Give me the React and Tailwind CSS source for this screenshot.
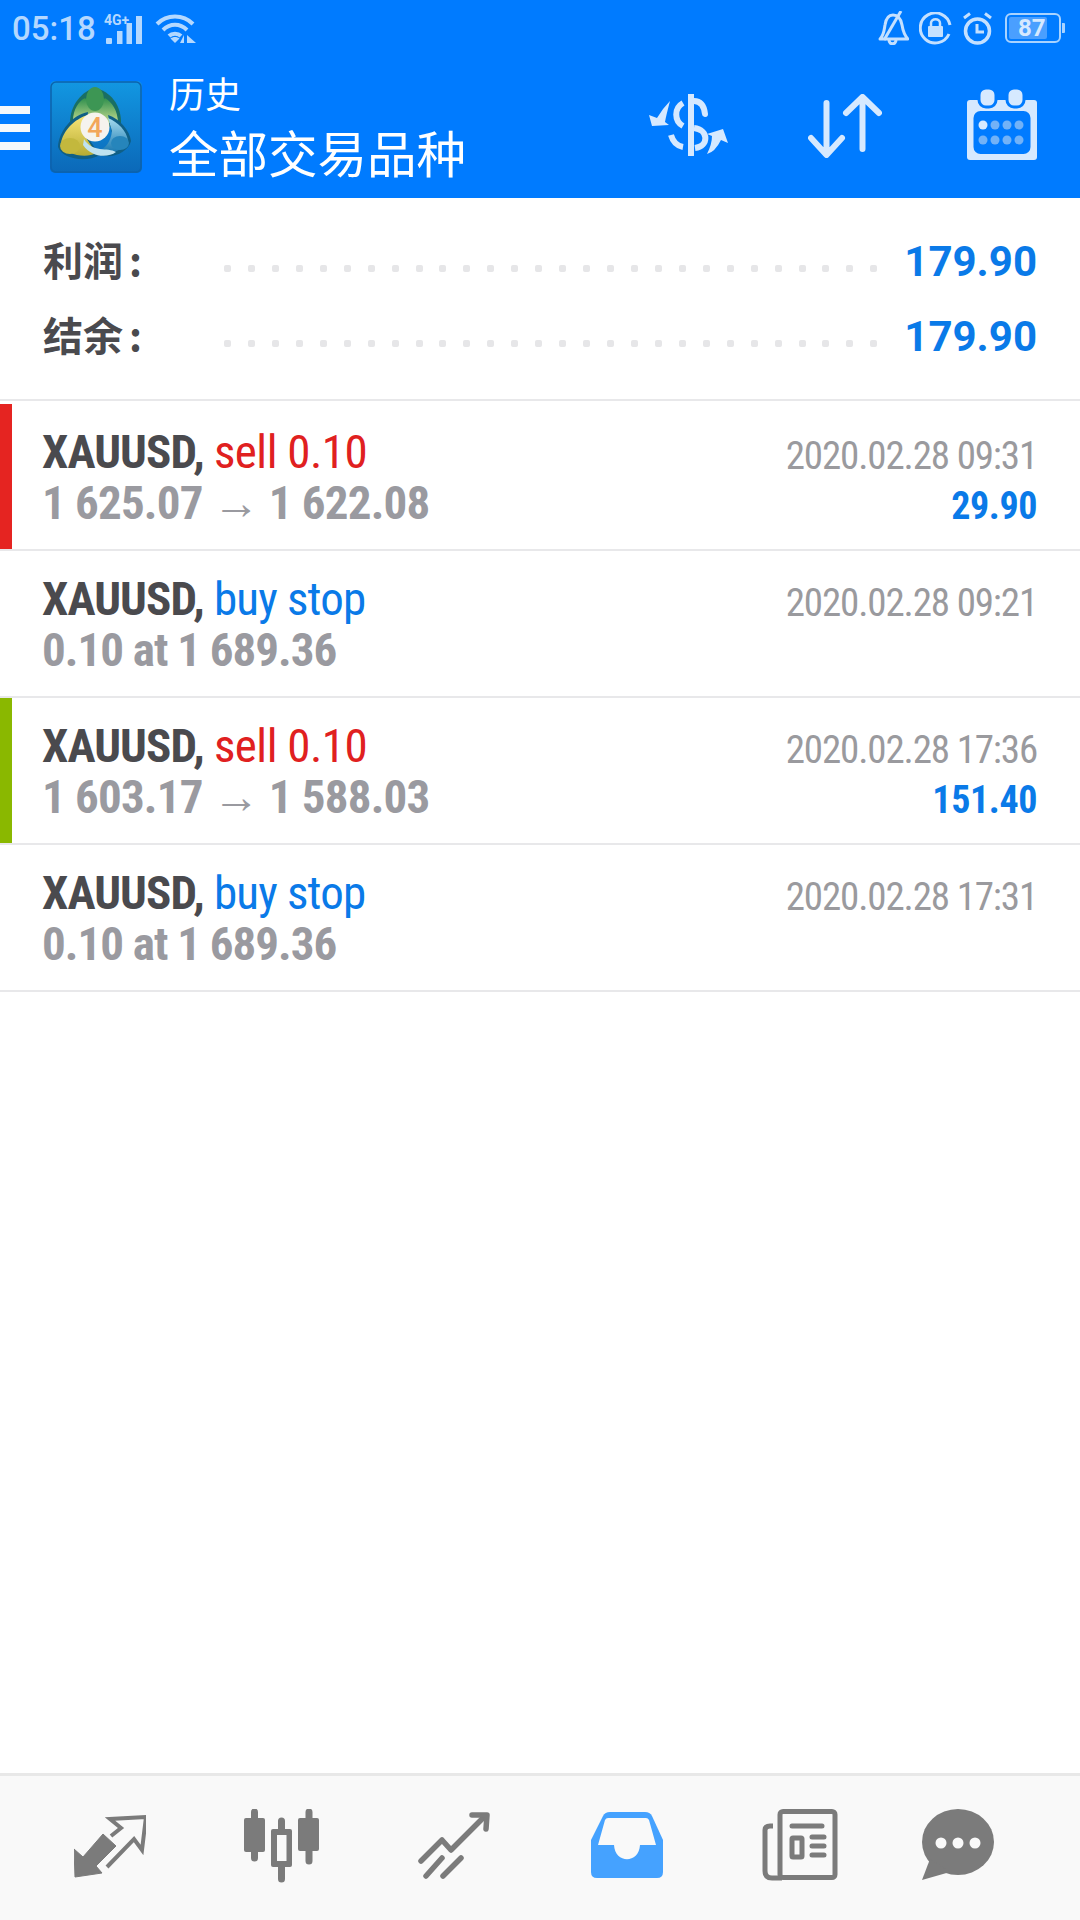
function Dots() {
  return (
    <div className="flex flex-1 justify-between ml-[81px] mr-[27px] mt-[16px]">
      {Array.from({ length: 28 }).map((_, i) => (
        <div key={i} className="w-[7px] h-[7px] rounded-[2px] bg-[#e6e6e8]" />
      ))}
    </div>
  );
}

function SummaryRow({ label, value }) {
  return (
    <div className="flex items-center h-[75px]">
      <span className="w-[100px] mb-[3px] text-[40px] leading-[72px] font-bold text-[#4a4a4e] font-['Noto_Sans_CJK_SC',sans-serif] whitespace-nowrap">{label}<span className="ml-[6px]">:</span></span>
      <Dots />
      <span className="mt-[2px] text-[42px] leading-[73px] font-bold text-[#0a7ae8] font-['Roboto',sans-serif]">{value}</span>
    </div>
  );
}

function Row({ bar, action, actionClass, line2, line2Class, date, profit, first }) {
  return (
    <div className={`flex border-b-2 border-[#e8e8ea] h-[147px] ${first ? "mt-[3px]" : ""}`}>
      <div className={`w-3 h-full ${bar || ""}`} />
      <div className="flex flex-1 justify-between pl-[30px] pr-[43px] pt-[23px] font-['Roboto',sans-serif] font-stretch-condensed">
        <div>
          <div className="text-[47px] leading-[50px] whitespace-nowrap tracking-[-0.9px]">
            <span className="font-bold text-[#4a4a4e]">XAUUSD, </span>
            <span className={actionClass}>{action}</span>
          </div>
          <div className={`text-[47px] leading-[51px] font-bold text-[#9a9aa0] whitespace-nowrap ${line2Class}`}>{line2}</div>
        </div>
        <div className="text-right pt-[4px]">
          <div className="text-[39px] leading-[50px] text-[#9a9a9e] whitespace-nowrap tracking-[-1.15px]">{date}</div>
          {profit && <div className="text-[38px] leading-[50px] font-bold text-[#0a7ae8] tracking-[-0.4px]">{profit}</div>}
        </div>
      </div>
    </div>
  );
}

function Signal() {
  return (
    <svg width="42" height="34" viewBox="0 0 42 34" className="ml-[8px] mt-[-1px]">
      <text x="0" y="13" fontSize="14" fontWeight="700" fill="#b4d8ff" fontFamily="Roboto, sans-serif">4G+</text>
      <rect x="2" y="26" width="6" height="6" rx="1" fill="#b4d8ff" />
      <rect x="13" y="19" width="5.500" height="13" fill="#b4d8ff" />
      <rect x="22.500" y="11" width="5.500" height="21" fill="#b4d8ff" />
      <rect x="32" y="4" width="6" height="28" fill="#b4d8ff" />
    </svg>
  );
}

function Wifi() {
  return (
    <svg width="42" height="30" viewBox="0 0 42 30" fill="none" stroke="#b4d8ff" className="ml-[9px]">
      <path d="M2 10C12 0 28 0 38 10" strokeWidth="4" />
      <path d="M8 16C15 9 25 9 32 16" strokeWidth="4" />
      <path d="M14 22C17 19 23 19 26 22" strokeWidth="4" />
      <path d="M20 29L15.500 24.500C18 22.500 22 22.500 24.500 24.500Z" fill="#b4d8ff" stroke="none" />
      <path d="M29 21V29H25ZM32 21V29H41Z" fill="#b4d8ff" stroke="none" />
    </svg>
  );
}

function Bell() {
  return (
    <svg width="32" height="34" viewBox="0 0 32 34" fill="none" stroke="#c4e0ff" strokeWidth="3">
      <path d="M3 28C7 24 7 20 8 14C9 7 12 4 16 4C21 4 24 8 25 14C26 20 27 24 31 28Z" strokeLinejoin="round" />
      <path d="M12 29C12 34 19 34 19 29" />
      <path d="M7 29L24 0" />
    </svg>
  );
}
function LockIcon() {
  return (
    <svg width="33" height="33" viewBox="0 0 33 33" fill="none" className="ml-[10px]">
      <path d="M30 22A15 15 0 1 1 31 13" stroke="#c4e0ff" strokeWidth="3" />
      <rect x="9" y="14" width="15" height="11" rx="1" fill="#c4e0ff" />
      <path d="M12 14V11C12 6 21 6 21 11V14" stroke="#c4e0ff" strokeWidth="2.500" />
    </svg>
  );
}
function Alarm() {
  return (
    <svg width="31" height="33" viewBox="0 0 31 33" fill="none" stroke="#c4e0ff" className="ml-[10px]">
      <circle cx="15.500" cy="19" r="12" strokeWidth="3.500" />
      <path d="M15 12V20H22" strokeWidth="3" />
      <path d="M2 6L8 1.500M29 6L23 1.500" strokeWidth="3" />
    </svg>
  );
}
function Battery() {
  return (
    <div className="flex items-center ml-[12px]">
      <div className="w-[56px] h-[30px] rounded-[6px] border-2 border-[#a9d3ff] p-[2px] flex">
        <div className="w-[38px] h-full rounded-[2px] bg-[#4a9fff] relative">
          <span className="absolute left-[9px] top-[-3px] text-[24px] leading-[28px] font-bold text-[#d6e9ff] font-['Roboto',sans-serif]">87</span>
        </div>
      </div>
      <div className="w-[3px] h-[10px] ml-[1px] bg-[#a9d3ff] rounded-r-[1px]" />
    </div>
  );
}

function Logo() {
  return (
    <svg width="92" height="92" viewBox="0 0 92 92" className="ml-[20px]">
      <defs>
        <linearGradient id="lg" x1="0" y1="0" x2="0" y2="1">
          <stop offset="0" stopColor="#1297e2" />
          <stop offset="1" stopColor="#0b68b8" />
        </linearGradient>
        <linearGradient id="gr" x1="0" y1="0" x2="0" y2="1">
          <stop offset="0" stopColor="#2f8f4e" />
          <stop offset="1" stopColor="#c4dc8f" />
        </linearGradient>
        <linearGradient id="yl" x1="0" y1="0" x2="0" y2="1">
          <stop offset="0" stopColor="#f7e578" />
          <stop offset="1" stopColor="#b7ac32" />
        </linearGradient>
        <linearGradient id="bl" x1="0" y1="0" x2="0" y2="1">
          <stop offset="0" stopColor="#a6dcef" />
          <stop offset="1" stopColor="#1877b0" />
        </linearGradient>
      </defs>
      <rect width="92" height="92" rx="5" fill="url(#lg)" />
      <rect x="1" y="1" width="90" height="90" rx="5" fill="none" stroke="#0c62ad" strokeWidth="1.500" />
      <path d="M20 42C20 24 32 10 45 7C60 10 72 24 71 44L46 48Z" fill="#1a6f63" />
      <path d="M23 40C23 28 29 20 35 17L45 28L55 17C62 21 68 30 68 42L46 42Z" fill="url(#gr)" />
      <ellipse cx="45" cy="18" rx="9" ry="12" fill="#3d9654" />
      <path d="M38 31C22 34 9 50 8 66C12 78 36 82 50 74L36 54Z" fill="#0f5f86" />
      <path d="M38 34C24 38 13 50 11 62C15 74 36 78 46 72L33 52Z" fill="url(#yl)" />
      <ellipse cx="20" cy="65" rx="10" ry="8" fill="#c3b83d" />
      <path d="M58 34C70 38 80 50 81 60C78 72 60 80 44 72Q60 68 62 52Z" fill="#0f5f86" />
      <path d="M58 37C68 41 77 50 78 60C74 70 60 74 48 70Q60 66 62 50Z" fill="url(#bl)" />
      <ellipse cx="70" cy="62" rx="9" ry="7" fill="#2685bb" />
      <path d="M34 58C42 72 58 66 66 71C58 77 42 77 33 64Z" fill="#bfe2f0" />
      <circle cx="45" cy="46" r="14.500" fill="#f5f3ee" />
      <text x="45" y="56" textAnchor="middle" fontSize="27" fontWeight="500" fill="#f2a65a" fontFamily="Roboto, sans-serif">4</text>
    </svg>
  );
}

function DollarIcon() {
  return (
    <svg width="80" height="62" viewBox="0 0 80 62" fill="none" stroke="#d6e9ff" strokeWidth="6" className="shrink-0">
      <path d="M42 0V61" strokeLinecap="round" />
      <path d="M45 7C51 7 55 11 56 20" strokeLinecap="round" />
      <path d="M34 9C25 14 25 27 34 32" />
      <path d="M45 34C60 36 60 52 46 54" />
      <path d="M22 41C24 48 28 52 34 53" />
      <path d="M0 21L8 24Q14 14 21 7Q17 22 16 28L20 31L3 32Z" fill="#d6e9ff" stroke="none" />
      <path d="M79 49L72 46Q66 58 58 60Q63 50 63 42L58 40L74 35Z" fill="#d6e9ff" stroke="none" />
    </svg>
  );
}
function ArrowsIcon() {
  return (
    <svg width="74" height="64" viewBox="0 0 74 64" fill="none" stroke="#d6e9ff" strokeWidth="6" strokeLinecap="round" strokeLinejoin="round" className="shrink-0 ml-[79px]">
      <path d="M18.500 9V60M3 44L18.500 61L34 44" />
      <path d="M54.500 4V55M38 19L54.500 3L71 19" />
    </svg>
  );
}
function CalendarIcon() {
  return (
    <svg width="70" height="72" viewBox="0 0 70 72" className="shrink-0 ml-[85px] mt-[-6px]">
      <rect x="0" y="12" width="70" height="60" rx="3" fill="#d6e9ff" />
      <rect x="6.500" y="23" width="57" height="43" rx="7" fill="#007bff" />
      <rect x="12" y="0" width="17" height="19" rx="7" fill="#d6e9ff" stroke="#007bff" strokeWidth="3" />
      <rect x="40" y="0" width="17" height="19" rx="7" fill="#d6e9ff" stroke="#007bff" strokeWidth="3" />
      {[16, 28, 40, 52].map((x, i) => (
        <circle key={x} cx={x} cy="37" r="4.500" fill={i === 0 ? "#d6e9ff" : "#72b2f7"} />
      ))}
      {[16, 28, 40, 52].map((x) => (
        <circle key={x} cx={x} cy="52" r="4.500" fill="#72b2f7" />
      ))}
    </svg>
  );
}

function NavTrade() {
  return (
    <svg width="72" height="64" viewBox="0 0 72 64" className="ml-[74px] mt-[6px]">
      <path d="M0 34L9 42L29 19L42 31L22 51L28 58L1 62Z" fill="#7b7b7b" stroke="#7b7b7b" strokeWidth="1" strokeLinejoin="round" />
      <path d="M33 52L60 24L68 35L72 2L36 4L47 13L37 21" fill="none" stroke="#7b7b7b" strokeWidth="4" />
    </svg>
  );
}
function NavCandles() {
  return (
    <svg width="76" height="74" viewBox="0 0 76 74" className="ml-[98px]">
      <path d="M10.500 3V49M37.500 12V70M65 3V52" stroke="#7b7b7b" strokeWidth="7" strokeLinecap="round" />
      <rect x="0" y="9" width="21" height="34" rx="2" fill="#7b7b7b" />
      <rect x="27" y="20" width="21" height="38" rx="2" fill="#7b7b7b" />
      <rect x="33" y="26" width="9.500" height="26" fill="#f9f9f9" />
      <rect x="54" y="9" width="21" height="33" rx="2" fill="#7b7b7b" />
    </svg>
  );
}
function NavChart() {
  return (
    <svg width="72" height="67" viewBox="0 0 72 67" fill="none" stroke="#7b7b7b" strokeWidth="5.500" strokeLinecap="round" strokeLinejoin="round" className="ml-[98px] mt-[3px]">
      <path d="M3 49L24 28L33 38L66 5" />
      <path d="M54 3H69L68 17" />
      <path d="M8 64L24 46M25 64L43 46" />
    </svg>
  );
}
function NavInbox() {
  return (
    <svg width="72" height="67" viewBox="0 0 72 67" className="ml-[101px] mt-[3px]">
      <path d="M19 0H54Q59 0 61 4L72 28V60Q72 66 66 66H6Q0 66 0 60V28L12 4Q14 0 19 0Z" fill="#45a2ff" />
      <path d="M17 6H55Q57 6 58 8L65 33H49C48 52 24 52 23 33H7L14 8Q15 6 17 6Z" fill="#f9f9f9" />
    </svg>
  );
}
function NavNews() {
  return (
    <svg width="76" height="72" viewBox="0 0 76 72" fill="none" stroke="#7b7b7b" strokeWidth="5" className="ml-[99px]">
      <rect x="18" y="2.500" width="55" height="66" rx="3" />
      <path d="M11 17H8Q3 17 3 21V62Q3 69 10 69H20" />
      <path d="M30 17H60M50 28H62M50 37H62M50 46H62" strokeLinecap="round" />
      <rect x="30" y="29" width="10" height="19" rx="1" />
    </svg>
  );
}
function NavChat() {
  return (
    <svg width="73" height="72" viewBox="0 0 73 72" className="ml-[84px]">
      <ellipse cx="36" cy="33" rx="36" ry="33" fill="#7b7b7b" />
      <path d="M8 50L0 71L28 63Z" fill="#7b7b7b" />
      <circle cx="19" cy="34" r="5.500" fill="#f9f9f9" />
      <circle cx="36" cy="34" r="5.500" fill="#f9f9f9" />
      <circle cx="53" cy="34" r="5.500" fill="#f9f9f9" />
    </svg>
  );
}

export default function App() {
  return (
    <div className="w-[1080px] h-[1920px] bg-white flex flex-col overflow-hidden">
      <header className="h-[198px] shrink-0 bg-[#007bff] flex flex-col">
        <div className="h-[60px] flex items-start justify-between pl-[12px] pr-[15px] pt-[11px]">
          <div className="flex items-center">
            <span className="text-[33px] leading-[36px] font-medium text-[#b4d8ff] font-['Roboto',sans-serif]">05:18</span>
            <Signal />
            <Wifi />
          </div>
          <div className="flex items-center">
            <Bell />
            <LockIcon />
            <Alarm />
            <Battery />
          </div>
        </div>
        <div className="flex items-start">
          <div className="w-[30px] flex flex-col gap-[10px] mt-[46px] shrink-0">
            <div className="h-2 bg-[#f5f8fb]" />
            <div className="h-2 bg-[#f5f8fb]" />
            <div className="h-2 bg-[#f5f8fb]" />
          </div>
          <div className="mt-[21px]"><Logo /></div>
          <div className="ml-[27px] w-[480px] font-['Noto_Sans_CJK_SC',sans-serif] text-white mt-[7px]">
            <div className="text-[36px] leading-[50px]">历史</div>
            <div className="text-[49.5px] leading-[70px]">全部交易品种</div>
          </div>
          <div className="flex mt-[34px]">
            <DollarIcon />
            <ArrowsIcon />
            <CalendarIcon />
          </div>
        </div>
      </header>

      <section className="h-[203px] shrink-0 pl-[43px] pr-[43px] pt-[25px] border-b-2 border-[#e8e8ea]">
        <SummaryRow label="利润" value="179.90" />
        <SummaryRow label="结余" value="179.90" />
      </section>

      <Row first bar="bg-[#e52421]" action="sell 0.10" actionClass="text-[#e02020] tracking-[-0.5px]" line2Class="tracking-[-0.8px]" line2={<>1 625.07<span className="font-medium mx-[10px]">→</span>1 622.08</>} date="2020.02.28 09:31" profit="29.90" />
      <Row action="buy stop" actionClass="text-[#0a7ae8] tracking-[-0.8px]" line2Class="tracking-[-1px]" line2="0.10 at 1 689.36" date="2020.02.28 09:21" />
      <Row bar="bg-[#8ab800]" action="sell 0.10" actionClass="text-[#e02020] tracking-[-0.5px]" line2Class="tracking-[-0.8px]" line2={<>1 603.17<span className="font-medium mx-[10px]">→</span>1 588.03</>} date="2020.02.28 17:36" profit="151.40" />
      <Row action="buy stop" actionClass="text-[#0a7ae8] tracking-[-0.8px]" line2Class="tracking-[-1px]" line2="0.10 at 1 689.36" date="2020.02.28 17:31" />

      <div className="flex-1" />

      <nav className="h-[147px] shrink-0 bg-[#f9f9f9] border-t-[3px] border-[#e8e8e8] flex items-start pt-[33px]">
        <NavTrade />
        <NavCandles />
        <NavChart />
        <NavInbox />
        <NavNews />
        <NavChat />
      </nav>
    </div>
  );
}
